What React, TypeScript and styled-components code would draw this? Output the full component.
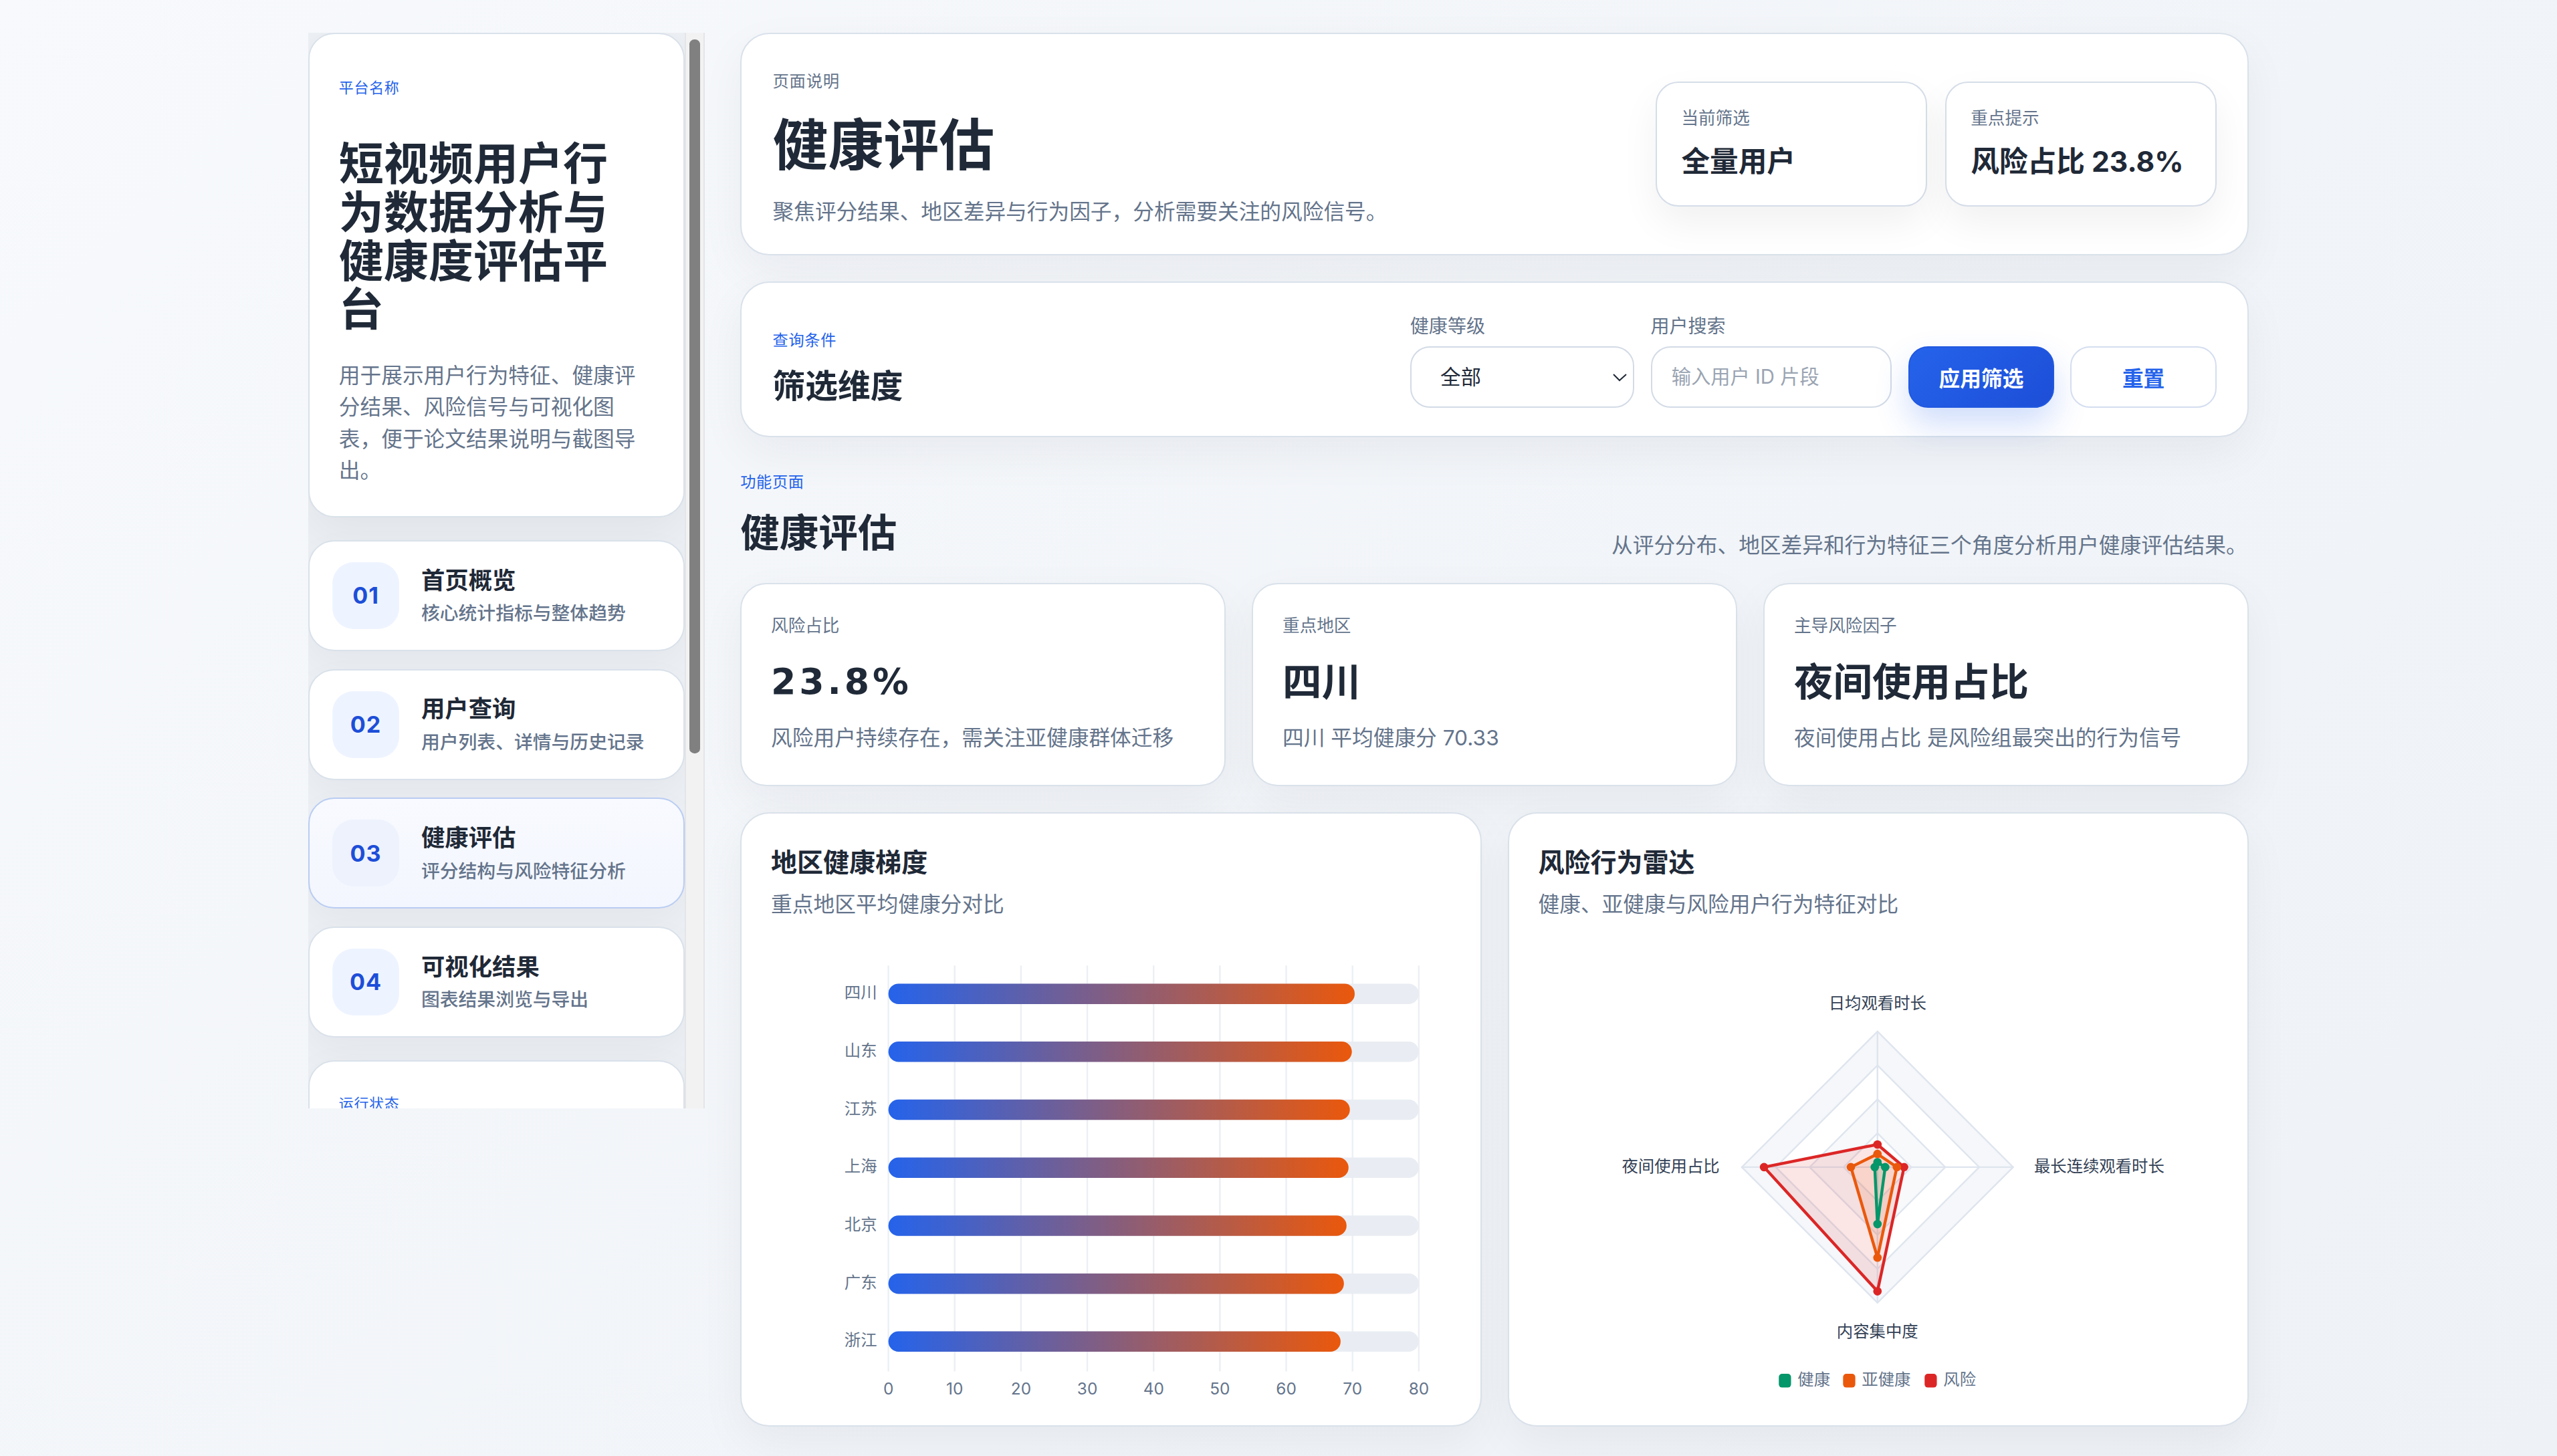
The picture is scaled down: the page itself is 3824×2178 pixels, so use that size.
import React from 'react';
import styled, { createGlobalStyle } from 'styled-components';

const SCALE = 3824 / 1568;

const GlobalStyle = createGlobalStyle`
  html, body {
    margin: 0;
    padding: 0;
    overflow: hidden;
    background: #f3f5f9;
  }
  body {
    font-family: Inter, "Noto Sans CJK SC", sans-serif;
    color: #1f2937;
  }
  * {
    box-sizing: border-box;
  }
`;

const Page = styled.div`
  zoom: ${SCALE};
  width: 1568px;
  height: 893px;
  padding-top: 20px;
  background: linear-gradient(135deg, #f7f9fc 0%, #f1f4f8 60%, #eef1f5 100%);
`;

const Shell = styled.div`
  width: 1190px;
  margin: 0 auto;
  display: grid;
  grid-template-columns: 243px 1fr;
  gap: 22px;
  align-items: start;
`;

const SidebarFrame = styled.div`
  height: 660px;
  display: flex;
  background: #eceff3;
`;

const Sidebar = styled.aside`
  width: 231px;
  height: 100%;
  overflow: hidden;
  display: flex;
  flex-direction: column;
  gap: 14px;

  & > * {
    flex-shrink: 0;
  }
`;

const ScrollTrack = styled.div`
  width: 12px;
  height: 100%;
  padding: 4.3px 2px 0;
  background: #f2f2f2;
  border-left: 1px solid #e4e5e8;
  border-right: 1px solid #e4e5e8;
`;

const ScrollThumb = styled.div`
  height: 438px;
  border-radius: 3px;
  background: #808080;
`;

const Card = styled.section`
  background: #ffffff;
  border: 1px solid #d9e1ea;
  border-radius: 16px;
  box-shadow: 0 10px 28px rgba(15, 23, 42, 0.05);
`;

const BrandCard = styled(Card)`
  padding: 26px 20px 18px 18px;
`;

const Eyebrow = styled.div<{ $tone?: 'blue' | 'gray'; $size?: number }>`
  font-size: ${(p) => p.$size ?? 9.5}px;
  line-height: 14px;
  letter-spacing: 0.3px;
  color: ${(p) => (p.$tone === 'gray' ? '#64748b' : '#2563eb')};
`;

const BrandTitle = styled.h1`
  margin: 25px 0 0;
  font-size: 27.5px;
  line-height: 29.8px;
  font-weight: 700;
  color: #1f2937;
`;

const BrandDesc = styled.p`
  margin: 15.5px 0 0;
  font-size: 13px;
  line-height: 19.5px;
  color: #64748b;
`;

const NavList = styled.nav`
  display: flex;
  flex-direction: column;
  gap: 11px;
`;

const NavItem = styled.div<{ $active?: boolean }>`
  height: 68px;
  display: flex;
  align-items: center;
  gap: 13.5px;
  padding: 0 14px;
  border-radius: 16px;
  border: 1px solid ${(p) => (p.$active ? '#b9ccf3' : '#d9e1ea')};
  background: ${(p) => (p.$active ? 'linear-gradient(180deg, #f8faff 0%, #f3f6fe 100%)' : '#ffffff')};
  box-shadow: 0 8px 22px rgba(15, 23, 42, 0.04);
`;

const NavBadge = styled.div<{ $active?: boolean }>`
  width: 41px;
  height: 41px;
  border-radius: 13px;
  background: ${(p) => (p.$active ? '#edf2fd' : '#eef4ff')};
  display: flex;
  align-items: center;
  justify-content: center;
  font-family: Inter, sans-serif;
  font-size: 14px;
  font-weight: 700;
  letter-spacing: 0.4px;
  color: #1d4ed8;
`;

const NavText = styled.div`
  display: flex;
  flex-direction: column;
  gap: 2px;
`;

const NavTitle = styled.div`
  font-size: 14.5px;
  line-height: 20px;
  font-weight: 700;
  color: #1f2937;
`;

const NavSub = styled.div`
  font-size: 11.4px;
  line-height: 16px;
  font-weight: 500;
  color: #64748b;
`;

const StatusCard = styled(Card)`
  min-height: 349px;
  padding: 19px 18px;
`;

const Main = styled.main`
  display: flex;
  flex-direction: column;
  gap: 16px;
`;

const HeaderCard = styled(Card)`
  border-radius: 18px;
  padding: 22px 19px 15.5px;
  display: flex;
  align-items: center;
  justify-content: space-between;
`;

const PageTitle = styled.h2`
  margin: 13px 0 0;
  font-size: 34px;
  line-height: 39px;
  font-weight: 700;
  color: #1f2937;
`;

const PageDesc = styled.p`
  margin: 11.5px 0 0;
  font-size: 13px;
  line-height: 20px;
  color: #64748b;
`;

const SummaryRow = styled.div`
  display: flex;
  gap: 11px;
  margin-bottom: 6.5px;
`;

const SummaryCard = styled.div`
  width: 166.5px;
  padding: 14.5px 15px 14.8px;
  border: 1px solid #d5dde8;
  border-radius: 14px;
  background: #ffffff;
  box-shadow: 0 10px 24px rgba(15, 23, 42, 0.06);
`;

const SummaryLabel = styled.div`
  font-size: 10.5px;
  line-height: 15px;
  color: #64748b;
`;

const SummaryValue = styled.div`
  margin-top: 7px;
  font-size: 17.5px;
  line-height: 24px;
  font-weight: 700;
  color: #1f2937;
`;

const FilterCard = styled(Card)`
  border-radius: 18px;
  padding: 19px 19px 17.5px;
  display: flex;
  align-items: flex-end;
  justify-content: space-between;
`;

const FilterTitle = styled.div`
  margin-top: 8px;
  font-size: 20px;
  line-height: 26px;
  font-weight: 700;
`;

const Controls = styled.div`
  display: flex;
  align-items: flex-end;
  gap: 10px;
`;

const Field = styled.label`
  display: flex;
  flex-direction: column;
  gap: 4px;
`;

const FieldLabel = styled.span`
  font-size: 11.5px;
  line-height: 16px;
  color: #64748b;
`;

const Select = styled.select`
  width: 137.5px;
  height: 37.5px;
  padding: 0 6px 0 14px;
  border: 1px solid #d3dbe6;
  border-radius: 12px;
  background: #ffffff;
  font-family: inherit;
  font-size: 12.5px;
  color: #1f2937;
`;

const Input = styled.input`
  width: 148px;
  height: 37.5px;
  padding: 0 12px;
  border: 1px solid #d3dbe6;
  border-radius: 12px;
  background: #ffffff;
  font-family: inherit;
  font-size: 12px;
  color: #1f2937;

  &::placeholder {
    color: #9aa4b2;
  }
`;

const Button = styled.button<{ $primary?: boolean }>`
  width: 89.5px;
  height: 37.5px;
  border-radius: 12px;
  font-family: inherit;
  font-size: 13px;
  font-weight: 700;
  cursor: pointer;
  border: 1px solid ${(p) => (p.$primary ? '#2158e0' : '#d4def0')};
  color: ${(p) => (p.$primary ? '#ffffff' : '#2563eb')};
  background: ${(p) => (p.$primary ? 'linear-gradient(135deg, #2563eb 0%, #1d4ed8 100%)' : '#ffffff')};
  box-shadow: ${(p) => (p.$primary ? '0 10px 20px rgba(37, 99, 235, 0.22)' : 'none')};
`;

const SectionHead = styled.div`
  padding: 4.5px 1px 0 0;
  display: flex;
  align-items: flex-end;
  justify-content: space-between;
`;

const SectionTitle = styled.h3`
  margin: 9px 0 0;
  font-size: 24px;
  line-height: 30px;
  font-weight: 700;
`;

const SectionNote = styled.p`
  margin: 0;
  font-size: 13px;
  line-height: 14px;
  color: #64748b;
`;

const StatGrid = styled.div`
  display: grid;
  grid-template-columns: repeat(3, 1fr);
  gap: 16px;
`;

const StatCard = styled(Card)`
  padding: 18px 18px 18.5px;
`;

const StatValue = styled.div<{ $numeric?: boolean }>`
  margin-top: 12.5px;
  height: 29px;
  font-family: ${(p) => (p.$numeric ? '"DejaVu Sans", sans-serif' : 'Inter, "Noto Sans CJK SC", sans-serif')};
  font-size: ${(p) => (p.$numeric ? 22 : 24)}px;
  letter-spacing: ${(p) => (p.$numeric ? 2 : 0)}px;
  line-height: 29px;
  font-weight: 700;
  color: #1f2937;
`;

const StatSub = styled.div`
  margin-top: 10px;
  font-size: 13px;
  line-height: 20px;
  color: #64748b;
`;

const ChartGrid = styled.div`
  display: grid;
  grid-template-columns: 1fr 1fr;
  gap: 16px;
`;

const ChartCard = styled(Card)`
  border-radius: 18px;
  padding: 18.5px 18px 13px;
`;

const ChartTitle = styled.h4`
  margin: 0;
  font-size: 16px;
  line-height: 22px;
  font-weight: 700;
`;

const ChartSub = styled.p`
  margin: 6px 0 0;
  font-size: 13px;
  line-height: 18px;
  color: #64748b;
`;

const ChartSvg = styled.svg`
  display: block;
  margin-top: 7.5px;
  font-family: Inter, "Noto Sans CJK SC", sans-serif;
`;

const navItems = [
  { no: '01', title: '首页概览', sub: '核心统计指标与整体趋势' },
  { no: '02', title: '用户查询', sub: '用户列表、详情与历史记录' },
  { no: '03', title: '健康评估', sub: '评分结构与风险特征分析', active: true },
  { no: '04', title: '可视化结果', sub: '图表结果浏览与导出' },
];

const stats = [
  { label: '风险占比', value: '23.8%', numeric: true, sub: '风险用户持续存在，需关注亚健康群体迁移' },
  { label: '重点地区', value: '四川', sub: '四川 平均健康分 70.33' },
  { label: '主导风险因子', value: '夜间使用占比', sub: '夜间使用占比 是风险组最突出的行为信号' },
];

const regions = [
  { name: '四川', value: 70.33 },
  { name: '山东', value: 69.9 },
  { name: '江苏', value: 69.6 },
  { name: '上海', value: 69.4 },
  { name: '北京', value: 69.1 },
  { name: '广东', value: 68.7 },
  { name: '浙江', value: 68.2 },
];

function RegionBars() {
  const x0 = 72;
  const unit = 4.066;
  const top = 38.4;
  const step = 35.55;
  const h = 12.5;
  const ticks = [0, 10, 20, 30, 40, 50, 60, 70, 80];

  return (
    <ChartSvg width={416} height={290} viewBox="0 0 416 290">
      <defs>
        <linearGradient id="regionGrad" x1="0" y1="0" x2="1" y2="0">
          <stop offset="0" stopColor="#2563eb" />
          <stop offset="1" stopColor="#ea580c" />
        </linearGradient>
      </defs>
      {ticks.map((t) => (
        <line key={t} x1={x0 + t * unit} x2={x0 + t * unit} y1={21} y2={270} stroke="#eceff3" strokeWidth={1} />
      ))}
      {regions.map((r, i) => {
        const cy = top + i * step;
        return (
          <g key={r.name}>
            <rect x={x0} y={cy - h / 2} width={80 * unit} height={h} rx={h / 2} fill="#e9edf3" />
            <rect x={x0} y={cy - h / 2} width={r.value * unit} height={h} rx={h / 2} fill="url(#regionGrad)" />
            <text x={65} y={cy} textAnchor="end" dominantBaseline="middle" fontSize={10} fill="#64748b">
              {r.name}
            </text>
          </g>
        );
      })}
      {ticks.map((t) => (
        <text key={t} x={x0 + t * unit} y={281.5} textAnchor="middle" dominantBaseline="middle" fontSize={10} fill="#64748b">
          {t}
        </text>
      ))}
    </ChartSvg>
  );
}

const radarAxes = [
  { label: '日均观看时长', dx: 0, dy: -1 },
  { label: '最长连续观看时长', dx: 1, dy: 0 },
  { label: '内容集中度', dx: 0, dy: 1 },
  { label: '夜间使用占比', dx: -1, dy: 0 },
];

const radarSeries = [
  { name: '风险', color: '#dc2626', fill: 'rgba(220, 38, 38, 0.12)', values: [0.167, 0.196, 0.915, 0.836] },
  { name: '亚健康', color: '#ea580c', fill: 'rgba(234, 88, 12, 0.12)', values: [0.097, 0.143, 0.667, 0.196] },
  { name: '健康', color: '#059669', fill: 'rgba(5, 150, 105, 0.12)', values: [0.036, 0.057, 0.42, 0.02] },
];

const legend = [
  { name: '健康', color: '#059669', x: 147.3 },
  { name: '亚健康', color: '#ea580c', x: 186.7 },
  { name: '风险', color: '#dc2626', x: 236.7 },
];

function RiskRadar() {
  const cx = 207.8;
  const cy = 144.7;
  const R = 83.2;
  const ring = (f: number) =>
    radarAxes.map((a) => `${cx + a.dx * R * f},${cy + a.dy * R * f}`).join(' ');

  return (
    <ChartSvg width={416} height={290} viewBox="0 0 416 290">
      <polygon points={ring(1)} fill="#f5f7fa" />
      <polygon points={ring(0.75)} fill="#ffffff" />
      <polygon points={ring(0.5)} fill="#f7f9fb" />
      <polygon points={ring(0.25)} fill="#ffffff" />
      {[1, 0.75, 0.5, 0.25].map((f) => (
        <polygon key={f} points={ring(f)} fill="none" stroke="#dfe5ee" strokeWidth={1} />
      ))}
      {radarAxes.map((a) => (
        <line key={a.label} x1={cx} y1={cy} x2={cx + a.dx * R} y2={cy + a.dy * R} stroke="#dfe5ee" strokeWidth={1} />
      ))}
      {radarSeries.map((s) => {
        const pts = s.values.map((v, i) => [cx + radarAxes[i].dx * R * v, cy + radarAxes[i].dy * R * v]);
        return (
          <g key={s.name}>
            <polygon
              points={pts.map((p) => p.join(',')).join(' ')}
              fill={s.fill}
              stroke={s.color}
              strokeWidth={1.8}
              strokeLinejoin="round"
            />
            {pts.map((p, i) => (
              <circle key={i} cx={p[0]} cy={p[1]} r={2.6} fill={s.color} />
            ))}
          </g>
        );
      })}
      <text x={cx} y={44.7} textAnchor="middle" dominantBaseline="middle" fontSize={10} fill="#334155">
        日均观看时长
      </text>
      <text x={303.8} y={cy} textAnchor="start" dominantBaseline="middle" fontSize={10} fill="#334155">
        最长连续观看时长
      </text>
      <text x={cx} y={246.3} textAnchor="middle" dominantBaseline="middle" fontSize={10} fill="#334155">
        内容集中度
      </text>
      <text x={111} y={cy} textAnchor="end" dominantBaseline="middle" fontSize={10} fill="#334155">
        夜间使用占比
      </text>
      {legend.map((l) => (
        <g key={l.name}>
          <rect x={l.x} y={275.7 - 4.2} width={7.5} height={8.4} rx={2} fill={l.color} />
          <text x={l.x + 11.5} y={275.7} dominantBaseline="middle" fontSize={10} fill="#64748b">
            {l.name}
          </text>
        </g>
      ))}
    </ChartSvg>
  );
}

export default function App() {
  return (
    <>
      <GlobalStyle />
      <Page>
        <Shell>
          <SidebarFrame>
            <Sidebar>
              <BrandCard>
                <Eyebrow $size={9}>平台名称</Eyebrow>
                <BrandTitle>短视频用户行为数据分析与健康度评估平台</BrandTitle>
                <BrandDesc>用于展示用户行为特征、健康评分结果、风险信号与可视化图表，便于论文结果说明与截图导出。</BrandDesc>
              </BrandCard>

              <NavList>
                {navItems.map((n) => (
                  <NavItem key={n.no} $active={n.active}>
                    <NavBadge $active={n.active}>{n.no}</NavBadge>
                    <NavText>
                      <NavTitle>{n.title}</NavTitle>
                      <NavSub>{n.sub}</NavSub>
                    </NavText>
                  </NavItem>
                ))}
              </NavList>

              <StatusCard>
                <Eyebrow $size={9}>运行状态</Eyebrow>
              </StatusCard>
            </Sidebar>
            <ScrollTrack>
              <ScrollThumb />
            </ScrollTrack>
          </SidebarFrame>

          <Main>
            <HeaderCard>
              <div>
                <Eyebrow $tone="gray" $size={10}>页面说明</Eyebrow>
                <PageTitle>健康评估</PageTitle>
                <PageDesc>聚焦评分结果、地区差异与行为因子，分析需要关注的风险信号。</PageDesc>
              </div>
              <SummaryRow>
                <SummaryCard>
                  <SummaryLabel>当前筛选</SummaryLabel>
                  <SummaryValue>全量用户</SummaryValue>
                </SummaryCard>
                <SummaryCard>
                  <SummaryLabel>重点提示</SummaryLabel>
                  <SummaryValue>风险占比 23.8%</SummaryValue>
                </SummaryCard>
              </SummaryRow>
            </HeaderCard>

            <FilterCard>
              <div>
                <Eyebrow>查询条件</Eyebrow>
                <FilterTitle>筛选维度</FilterTitle>
              </div>
              <Controls>
                <Field>
                  <FieldLabel>健康等级</FieldLabel>
                  <Select defaultValue="all">
                    <option value="all">全部</option>
                    <option value="healthy">健康</option>
                    <option value="sub">亚健康</option>
                    <option value="risk">风险</option>
                  </Select>
                </Field>
                <Field>
                  <FieldLabel>用户搜索</FieldLabel>
                  <Input placeholder="输入用户 ID 片段" />
                </Field>
                <Button $primary>应用筛选</Button>
                <Button>重置</Button>
              </Controls>
            </FilterCard>

            <SectionHead>
              <div>
                <Eyebrow>功能页面</Eyebrow>
                <SectionTitle>健康评估</SectionTitle>
              </div>
              <SectionNote>从评分分布、地区差异和行为特征三个角度分析用户健康评估结果。</SectionNote>
            </SectionHead>

            <StatGrid>
              {stats.map((s) => (
                <StatCard key={s.label}>
                  <SummaryLabel>{s.label}</SummaryLabel>
                  <StatValue $numeric={s.numeric}>{s.value}</StatValue>
                  <StatSub>{s.sub}</StatSub>
                </StatCard>
              ))}
            </StatGrid>

            <ChartGrid>
              <ChartCard>
                <ChartTitle>地区健康梯度</ChartTitle>
                <ChartSub>重点地区平均健康分对比</ChartSub>
                <RegionBars />
              </ChartCard>
              <ChartCard>
                <ChartTitle>风险行为雷达</ChartTitle>
                <ChartSub>健康、亚健康与风险用户行为特征对比</ChartSub>
                <RiskRadar />
              </ChartCard>
            </ChartGrid>
          </Main>
        </Shell>
      </Page>
    </>
  );
}
